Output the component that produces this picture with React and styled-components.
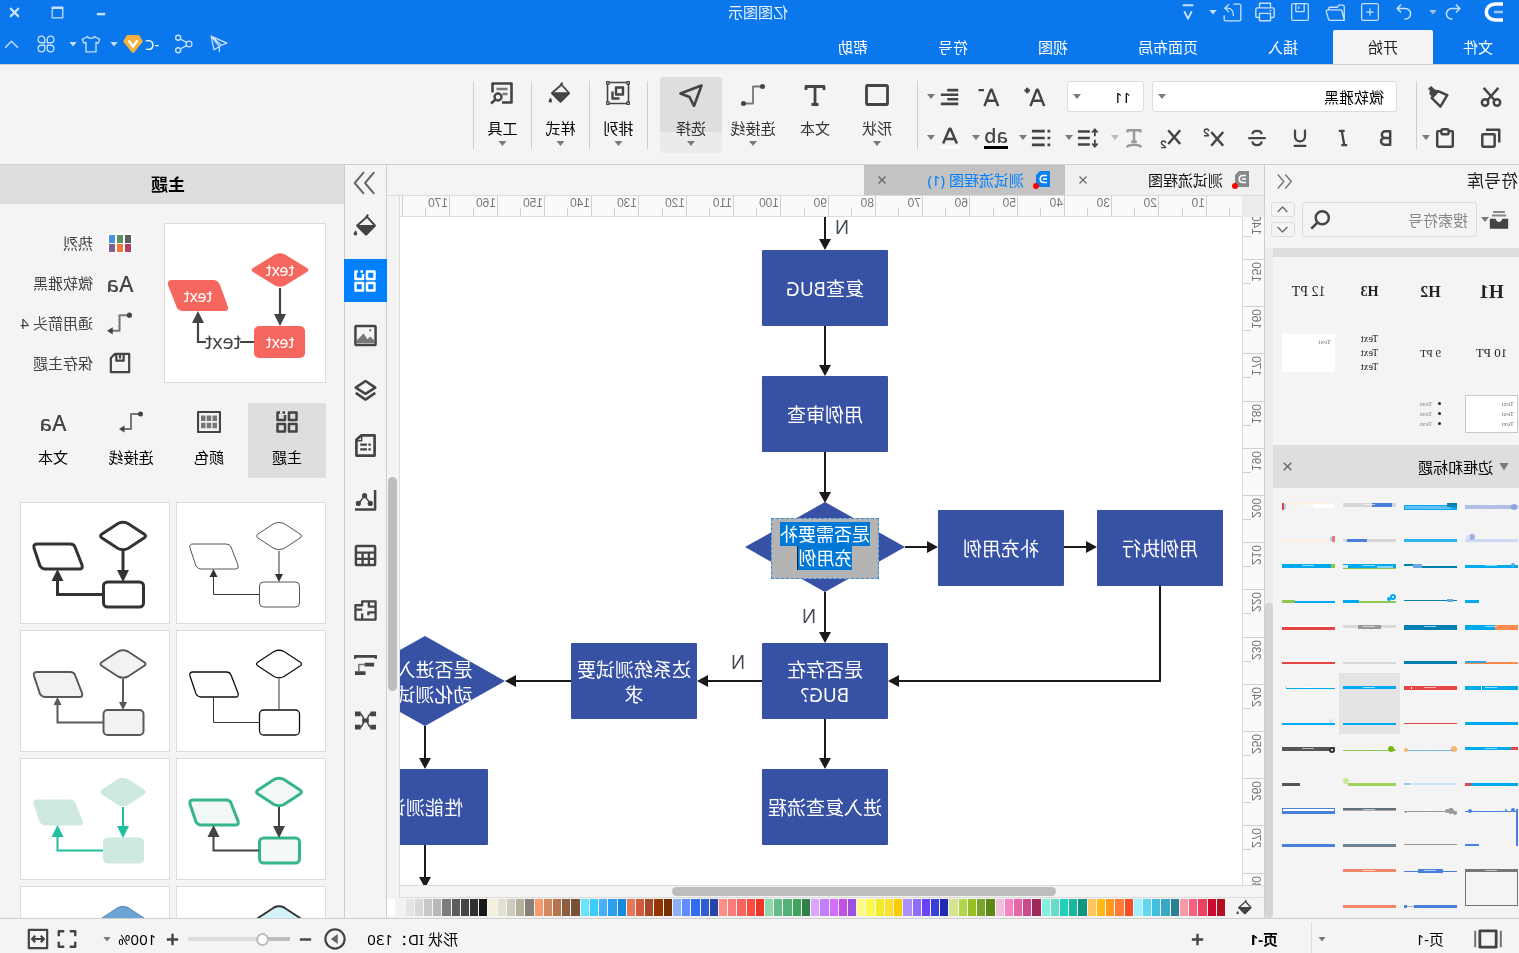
import React from "react";
import styled, { createGlobalStyle, css } from "styled-components";

const GlobalStyle = createGlobalStyle`
  *, *::before, *::after { box-sizing: border-box; }
  html, body, #root { height: 100%; }
  body { margin: 0; overflow: hidden; background: #f4f4f4; }
  body, button, input, select {
    font-family: "Noto Sans", "Noto Sans CJK SC", sans-serif;
    font-size: 15px;
    line-height: 20px;
    color: #111;
  }
  button { border: 0; padding: 0; margin: 0; background: none; cursor: pointer; color: inherit; }
  svg { display: block; flex: none; }
`;

const BLUE = "#0a77ec";
const LINE = "#cfcfcf";
const BAR = "#dedede";

/* The whole window is shown flipped left to right. */
const Window = styled.div`
  height: 100vh;
  display: flex;
  flex-direction: column;
  background: #f4f4f4;
  transform: scaleX(-1);
`;

const Caret = styled.span`
  flex: none;
  width: 8px;
  height: 5px;
  margin-right: ${(p) => p.$after || 0}px;
  background: ${(p) => p.$color || "#7a7a7a"};
  clip-path: polygon(0 0, 100% 0, 50% 100%);
`;

/* ---------- icons ---------- */

const glyphs = {
  undo: <path d="M8 3 3.500 7.500 8 12M4 7.500h9a6 6 0 0 1 0 12h-1" />,
  redo: <path d="M16 3l4.500 4.500L16 12M20 7.500h-9a6 6 0 0 0 0 12h1" />,
  add: (
    <>
      <rect x="2" y="2" width="20" height="20" rx="2" />
      <path d="M12 7.500v9M7.500 12h9" />
    </>
  ),
  folder: <path d="M2 21V5.500a2 2 0 0 1 2-2h4l2 2.500h8a2 2 0 0 1 2 2V9M2 21l2.500-10a2 2 0 0 1 2-2H21a1.500 1.500 0 0 1 1.500 2L20 19.500a2 2 0 0 1-2 1.500z" />,
  save: (
    <>
      <rect x="2" y="2" width="20" height="20" rx="2" />
      <path d="M7 2.500v9h10v-9M13.500 5v3.500" />
    </>
  ),
  print: (
    <>
      <path d="M6 7.500V2.500h12v5M6 18H3.500A1.500 1.500 0 0 1 2 16.500V9a1.500 1.500 0 0 1 1.500-1.500h17A1.500 1.500 0 0 1 22 9v7.500a1.500 1.500 0 0 1-1.500 1.500H18" />
      <path d="M6 13.500h12v8H6zM5 10.500h2" />
    </>
  ),
  exportFile: <path d="M11 2.500H4a1.500 1.500 0 0 0-1.500 1.500v16A1.500 1.500 0 0 0 4 21.500h16a1.500 1.500 0 0 0 1.500-1.500v-5M16 2.500l5 4.500-5 4.500M21 7h-3c-5 0-7 4-7 9" />,
  more: <path d="M5 3h14M7 11l5 10 5-10" />,
  send: <path d="M21.500 2.500 2.500 11l6.500 2.500zM21.500 2.500 18 19l-6.500-4zM11.500 15v6.500M9 13.500l2.500 1.500" />,
  share: (
    <>
      <circle cx="6" cy="12" r="3.500" />
      <circle cx="19" cy="4.500" r="3" />
      <circle cx="19" cy="19.500" r="3" />
      <path d="m9 10 7.500-4M9 14l7.500 4" />
    </>
  ),
  shirt: <path d="M8 3 1.500 6.500 3.500 11 6 10v11.500h12V10l2.500 1 2-4.500L16 3c-1 3-7 3-8 0z" />,
  clover: <path d="M10.500 10.500V6.500a4 4 0 1 0-4 4zM13.500 10.500V6.500a4 4 0 1 1 4 4zM10.500 13.500v4a4 4 0 1 1-4-4zM13.500 13.500v4a4 4 0 1 0 4-4z" />,
  up: <path d="m3 16.500 9-9 9 9" />,
  down: <path d="m3 7.500 9 9 9-9" />,
  minimize: <path d="M7 14.500h10" />,
  maximize: <path d="M3.500 3.500h17v17h-17zM3.500 5.500h17" />,
  close: <path d="m5 5 14 14M19 5 5 19" />,
  cut: (
    <>
      <circle cx="5.500" cy="18" r="3.500" />
      <circle cx="18.500" cy="18" r="3.500" />
      <path d="m20 2-12 13.500M4 2l12 13.500" />
    </>
  ),
  painter: (
    <>
      <path d="M3 10 13 5.500l7 7.500-9.500 9.500z" />
      <path d="m13 5 4-1.500L20.500 0 24 3l-2 2 .5 4-3.500 3z" fill="currentColor" stroke="none" />
    </>
  ),
  copy: (
    <>
      <rect x="8" y="8" width="13.500" height="13.500" rx="1" />
      <path d="M3 17V3h14.500" />
    </>
  ),
  paste: (
    <>
      <path d="M7.500 4.500H4.500a1 1 0 0 0-1 1v15a1 1 0 0 0 1 1h15a1 1 0 0 0 1-1v-15a1 1 0 0 0-1-1h-3" />
      <rect x="8" y="2.500" width="8" height="5.500" rx="2" />
    </>
  ),
  grow: <path d="m2 22 7-18h1l7 18M5 16h9M17.500 5h6M20.500 2v6" />,
  shrink: <path d="m2 22 7-18h1l7 18M5 16h9M17.500 4.500h6" />,
  align: <path d="M3 4.500h12M3 9.500h19M3 14.500h12M3 19.500h19" strokeWidth="2.800" />,
  bold: <path d="M7 4h6a4 4 0 0 1 0 8H7zM7 12h7a4 4 0 0 1 0 8H7z" strokeWidth="3" />,
  italic: <path d="M7 3.500h7M10 20.500h7M10.500 3.500 13.500 20.500" strokeWidth="2.800" transform="matrix(-1 0 0 1 24 0)" />,
  underline: <path d="M6 2v8a6 6 0 0 0 12 0V2M4.500 21.500h15" />,
  strike: <path d="M17.500 7.500C17 2 7 2 6.500 7.500M1.500 12h21M6.500 16c.500 6 10.500 6 11 0" />,
  sup: (
    <>
      <path d="m2 5.500 13 15M15 5.500l-13 15" />
      <path d="M18 4.500c0-3 4.500-3 4.500 0 0 2-4.500 3-4.500 5h5" strokeWidth="1.600" />
    </>
  ),
  sub: (
    <>
      <path d="m2 3.500 13 15M15 3.500l-13 15" />
      <path d="M18 17.500c0-3 4.500-3 4.500 0 0 2-4.500 3-4.500 5h5" strokeWidth="1.600" />
    </>
  ),
  curveText: <path d="M5 6V3.500h14V6M12 3.500V16M9 16h6M4 22c3-3.500 13-3.500 16 0" />,
  spacing: (
    <>
      <path d="M10 5h13M10 12h13M10 19h13" strokeWidth="2.800" />
      <path d="M4.500 3.500V10M1.500 6l3-3.500 3 3.500M4.500 14v6.500M1.500 18l3 3.500 3-3.500" strokeWidth="2" />
    </>
  ),
  list: <path d="M3 4.500h3M9 4.500h14M3 12h3M9 12h14M3 19.500h3M9 19.500h14" strokeWidth="2.800" />,
  fontColor: (
    <>
      <path d="m4.500 18 7-16h1l7 16M7.500 13h9" />
      <path d="M2 22h20" stroke="#fff" strokeWidth="3" />
    </>
  ),
  rect: <rect x="1.500" y="2.500" width="21" height="19" rx="1" strokeWidth="2.800" />,
  text: <path d="M3 7V3.500h18V7M12 3.500v18M8.500 21.500h7" strokeWidth="2.800" />,
  connector: (
    <>
      <path d="M3 3.500h9v17h9" stroke="#777" strokeWidth="1.800" />
      <circle cx="2.500" cy="3.500" r="2.500" fill="currentColor" stroke="none" />
      <circle cx="21.500" cy="20.500" r="2.500" fill="currentColor" stroke="none" />
    </>
  ),
  connectorArrow: (
    <>
      <path d="M3 4h9v15h7" stroke="#777" strokeWidth="2" />
      <circle cx="2.500" cy="4" r="2.500" fill="currentColor" stroke="none" />
      <path d="M18.500 15.500V22.500L24 19z" fill="currentColor" stroke="none" />
    </>
  ),
  select: <path d="M1.500 2.500 22.500 10.500 13.500 14 9 23z" strokeWidth="2.600" />,
  arrange: (
    <>
      <path d="M1.500 1.500h21v21h-21z" strokeWidth="1.600" />
      <path d="M7 6.500h7v7H7zM17.500 10.500v7h-7" strokeWidth="2.400" />
      <path d="M.7.7h2.400v2.400H.7zM20.900.7h2.400v2.400h-2.400zM.7 20.900h2.400v2.400H.7zM20.900 20.900h2.400v2.400h-2.400z" fill="#fff" strokeWidth="1.300" />
    </>
  ),
  bucket: (
    <>
      <path d="M11.500 2.500 3 12l8.500 8.500L20 12 11.500 4.500 9.500 1.500" strokeWidth="1.800" />
      <path d="M3.500 12.500h16l-8 8z" fill="currentColor" />
      <path d="M21.500 16.500c3 4 2 5 0 5s-2-2 0-5z" fill="currentColor" stroke="none" />
    </>
  ),
  tools: (
    <>
      <path d="M12 21.500H2.500V2.500h19v9" strokeWidth="2.600" />
      <path d="M6.500 8h11M6.500 13h5" stroke="#777" />
      <circle cx="16" cy="16" r="3.500" />
      <path d="m18.500 18.500 4.500 4" />
    </>
  ),
  collapse: <path d="m11 2-8.500 10 8.500 10M21.500 2 13 12l8.500 10" />,
  expand: <path d="m3.500 2 8.500 10-8.500 10M13 2l8.500 10L13 22" strokeWidth="1.800" />,
  library: (
    <>
      <path d="M5 2.500h14M3.500 6.500h17" stroke="#888" strokeWidth="2.400" />
      <path d="M1 10.500h7c1 5 7 5 8 0h7v11a1 1 0 0 1-1 1H2a1 1 0 0 1-1-1z" fill="currentColor" stroke="none" />
    </>
  ),
  search: (
    <>
      <circle cx="10" cy="10" r="7.500" strokeWidth="2.800" />
      <path d="m15.500 15.500 7 7" strokeWidth="3" />
    </>
  ),
  blocks: (
    <path d="M2.500 2.500h7.500v7.500H2.500zM14 5V10h7.500V2.500H19M14 2.500h2.500M2.500 14h7.500v7.500H2.500zM14 14h7.500v7.500H14z" strokeWidth="2.500" />
  ),
  image: (
    <>
      <rect x="1.500" y="2" width="21" height="20" rx="1" strokeWidth="2.600" />
      <path d="M3 20v-3l4-4 3 3 4-6 7 7v3z" fill="#777" stroke="none" />
      <path d="M6 6.500h2" stroke="#777" />
    </>
  ),
  layers: <path d="M12 2 1.800 9 12 15.500 22.200 9zM1.800 14.500 12 21.500l10.200-7" strokeWidth="2.600" />,
  doc: (
    <>
      <path d="M2.500 1.500h14L21.500 6v16.500h-19z" strokeWidth="2.800" />
      <path d="M6.500 11h2.500M10.500 11h7M6.500 16h2.500M10.500 16h7" strokeWidth="2.400" />
      <path d="M16 2v5h5" strokeWidth="1.500" />
    </>
  ),
  chart: (
    <>
      <path d="M2 1v20.500h21" strokeWidth="2.600" />
      <path d="M7 15 13 7l6 8" strokeWidth="1.500" />
      <g fill="currentColor" stroke="none">
        <circle cx="7" cy="15" r="2.700" />
        <circle cx="13" cy="7" r="2.700" />
        <circle cx="19.500" cy="15" r="2.700" />
      </g>
    </>
  ),
  table: (
    <>
      <rect x="2" y="2" width="20" height="20" rx="1" strokeWidth="2.600" />
      <path d="M2 9h20M2 15.500h20M8.500 9v13M15 9v13" strokeWidth="2.400" />
    </>
  ),
  floor: <path d="M1.500 2.500h14v4h7v15h-21zM8.500 3v5h-6M8.500 14h-6M9 13v4M15.500 21.500V15M15.500 11h6" strokeWidth="2.400" />,
  slides: (
    <>
      <path d="M1 5V2.500h22V5" strokeWidth="3" />
      <path d="M3 9h10v4H3zM12 18h11v4H12z" fill="currentColor" stroke="none" />
      <path d="M12 11h7v7" stroke="#777" strokeWidth="1.600" />
    </>
  ),
  mind: (
    <>
      <path d="M6 5c4 0 3 7 6 7s2-7 6-7M6 19c4 0 3-7 6-7s2 7 6 7" strokeWidth="1.600" />
      <path d="M1 2.500h6v5H1zM17 2.500h6v5h-6zM1 16.500h6v5H1zM17 16.500h6v5h-6zM8.500 10h7v4h-7z" fill="currentColor" stroke="none" />
    </>
  ),
  palette: (
    <>
      <path d="M1 2h22v20H1z" />
      <path d="M4 5.500h4.500v5.500H4zM9.800 5.500h4.500v5.500H9.800zM15.500 5.500H20v5.500h-4.500zM4 12.800h4.500v5.500H4zM9.800 12.800h4.500v5.500H9.800zM15.500 12.800H20v5.500h-4.500z" fill="#777" stroke="none" />
    </>
  ),
  disk: <path d="M2 2h15.500L22 6.500V22H2zM8 3v6.500h8V3M12 3v4" strokeWidth="2.400" />,
  pages: (
    <>
      <rect x="5" y="5" width="14" height="14" strokeWidth="2.400" />
      <path d="M1 5v14M23 5v14" strokeWidth="1.800" stroke="#777" />
    </>
  ),
  plus: <path d="M12 4v16M4 12h16" strokeWidth="3.400" />,
  minus: <path d="M4 12h16" strokeWidth="3.400" />,
  present: (
    <>
      <circle cx="12" cy="12" r="10.500" strokeWidth="2.400" />
      <path d="M9 6.500v11l7.500-5.500z" fill="#666" stroke="none" />
    </>
  ),
  fullscreen: <path d="M3 9V3.500h6M15 3.500h6V9M21 15v5.500h-6M9 20.500H3V15" strokeWidth="2.600" />,
  fit: <path d="M2 2h20v20H2zM6 12h12M9 8.500 5.500 12 9 15.500M15 8.500l3.500 3.500-3.500 3.500" strokeWidth="2.400" />,
};

const Icon = ({ name, size = 24, weight = 2.2 }) => (
  <svg
    width={size}
    height={size}
    viewBox="0 0 24 24"
    fill="none"
    stroke="currentColor"
    strokeWidth={weight}
    strokeLinejoin="round"
    aria-hidden="true"
  >
    {glyphs[name]}
  </svg>
);

/* ---------- title bar and menu ---------- */

const Header = styled.header`
  background: ${BLUE};
  color: #c8e0fb;
  border-bottom: 1px solid ${LINE};
`;

const TitleBar = styled.div`
  height: 30px;
  display: grid;
  grid-template-columns: 1fr auto 1fr;
  padding: 0 2px 6px 5px;
  align-items: center;
`;

const Title = styled.h1`
  margin: 0;
  font-size: 15px;
  font-weight: 400;
  line-height: 20px;
  color: #e8f2ff;
`;

const QuickBar = styled.div`
  display: flex;
  align-items: center;
  padding-left: 10px;
`;

const Logo = styled.svg`
  margin-right: 15px;
`;

const QuickButton = styled.button`
  width: ${(p) => p.$w || 35}px;
  height: 22px;
  color: inherit;
  display: flex;
  align-items: center;
  justify-content: center;
`;

const WindowButtons = styled.div`
  display: flex;
  justify-content: flex-end;
`;

const WindowButton = styled(QuickButton)`
  width: 26px;
  margin-left: 17px;
`;

const MenuRow = styled.div`
  height: 34px;
  display: flex;
  justify-content: space-between;
`;

const Tabs = styled.nav`
  display: flex;
`;

const MenuTab = styled.button`
  padding: ${(p) => (p.$first ? "0 30px 0 26px" : "0 35px")};
  height: 34px;
  font-size: 15px;
  color: ${(p) => (p.$active ? "#222" : "#fff")};
  background: ${(p) => (p.$active ? "#f4f4f4" : "transparent")};
  border-radius: 2px 2px 0 0;
`;

const MenuTools = styled.div`
  display: flex;
  align-items: center;
  padding: 0 0 6px;
`;

const UserName = styled.span`
  color: #fff;
  font-size: 15px;
  margin: 0 2px 0 7px;
`;

const AppHeader = () => (
  <Header>
    <TitleBar>
      <QuickBar>
        <Logo width="20" height="22" viewBox="0 0 20 22" fill="none" aria-label="logo">
          <path d="M1 3h7c13 0 13 16 0 16H1" stroke="#fff" strokeWidth="3.600" />
          <path d="M1 11h9" stroke="#9cc9f8" strokeWidth="2.600" />
        </Logo>
        <QuickButton $w={32} aria-label="撤销"><Icon name="undo" size={21} weight={1.7} /></QuickButton>
        <Caret $color="#a8c4dc" $after={7} />
        <QuickButton $w={34} aria-label="重做"><Icon name="redo" size={21} weight={1.7} /></QuickButton>
        <QuickButton aria-label="新建"><Icon name="add" size={20} weight={1.5} /></QuickButton>
        <QuickButton aria-label="打开"><Icon name="folder" size={21} weight={1.5} /></QuickButton>
        <QuickButton aria-label="保存"><Icon name="save" size={20} weight={1.5} /></QuickButton>
        <QuickButton aria-label="打印"><Icon name="print" size={22} weight={1.5} /></QuickButton>
        <QuickButton $w={31} aria-label="导出"><Icon name="exportFile" size={21} weight={1.5} /></QuickButton>
        <Caret $color="#c8e0fb" />
        <QuickButton $w={42} aria-label="更多"><Icon name="more" size={18} weight={2.4} /></QuickButton>
      </QuickBar>
      <Title>亿图图示</Title>
      <WindowButtons>
        <WindowButton aria-label="最小化"><Icon name="minimize" size={20} weight={3} /></WindowButton>
        <WindowButton aria-label="最大化"><Icon name="maximize" size={15} weight={2} /></WindowButton>
        <WindowButton aria-label="关闭"><Icon name="close" size={15} weight={3.4} /></WindowButton>
      </WindowButtons>
    </TitleBar>
    <MenuRow>
      <Tabs>
        <MenuTab $first>文件</MenuTab>
        <MenuTab $active>开始</MenuTab>
        <MenuTab>插入</MenuTab>
        <MenuTab>页面布局</MenuTab>
        <MenuTab>视图</MenuTab>
        <MenuTab>符号</MenuTab>
        <MenuTab>帮助</MenuTab>
      </Tabs>
      <MenuTools>
        <QuickButton aria-label="发送"><Icon name="send" size={20} weight={1.5} /></QuickButton>
        <QuickButton aria-label="分享"><Icon name="share" size={20} weight={1.6} /></QuickButton>
        <UserName>-C</UserName>
        <svg width="20" height="18" viewBox="0 0 20 18" aria-label="VIP">
          <path d="M4 0h12l4 6.500L11 17.500a1.500 1.500 0 0 1-2 0L0 6.500z" fill="#f6b040" />
          <path d="m5.500 5.500 4.500 6 4.500-6" stroke="#fff" strokeWidth="2.400" fill="none" />
        </svg>
        <QuickButton $w={18} aria-label="账户"><Caret $color="#c8e0fb" /></QuickButton>
        <QuickButton $w={28} aria-label="皮肤"><Icon name="shirt" size={20} weight={1.6} /></QuickButton>
        <Caret $color="#c8e0fb" />
        <QuickButton $w={46} aria-label="应用"><Icon name="clover" size={20} weight={1.6} /></QuickButton>
        <QuickButton $w={23} aria-label="收起"><Icon name="up" size={17} weight={2} /></QuickButton>
      </MenuTools>
    </MenuRow>
  </Header>
);

/* ---------- ribbon ---------- */

const Ribbon = styled.div`
  height: 100px;
  flex: none;
  display: flex;
  align-items: flex-start;
  padding-top: 16px;
  border-bottom: 1px solid ${LINE};
  color: #444;
`;

const Divider = styled.span`
  flex: none;
  width: 1px;
  height: 68px;
  background: ${LINE};
`;

const ClipGroup = styled.div`
  display: grid;
  grid-template-columns: 36px 36px;
  grid-auto-rows: 31px;
  gap: 10px 16px;
  padding: 0 4px 0 10px;
`;

const ToolButton = styled.button`
  width: ${(p) => p.$w || 36}px;
  height: 31px;
  color: ${(p) => (p.$muted ? "#999" : "#444")};
  display: flex;
  align-items: center;
  justify-content: center;
  gap: 4px;
`;

const FontGroup = styled.div`
  display: grid;
  gap: 10px;
  width: 498px;
  padding-right: 8px;
`;

const FontRow = styled.div`
  display: flex;
  align-items: center;
  padding-left: ${(p) => p.$inset}px;
`;

const Spread = styled.div`
  flex: 1;
  display: flex;
  justify-content: space-between;
  padding-left: 4px;
`;

const Picker = styled.label`
  display: flex;
  align-items: center;
  width: ${(p) => p.$w}px;
  height: 31px;
  margin-right: ${(p) => p.$after}px;
  padding-right: 5px;
  background: #fff;
  border: 1px solid #dcdcdc;
  border-radius: 3px;

  select {
    flex: 1;
    height: 29px;
    appearance: none;
    border: 0;
    background: none;
    padding: 0 0 0 12px;
    color: #000;
  }
`;

const Highlight = styled.span`
  width: 24px;
  height: 23px;
  font-size: 20px;
  font-weight: 500;
  line-height: 19px;
  border-bottom: 3px solid #000;
`;

const BigGroup = styled.div`
  display: flex;
  margin-top: -4px;
  padding: 0 12px 0 9px;
`;

const BigButton = styled.button`
  width: ${(p) => (p.$narrow ? 57 : 62)}px;
  height: 76px;
  padding-top: ${(p) => (p.$narrow ? 4 : 6)}px;
  display: flex;
  flex-direction: column;
  align-items: center;
  border-radius: 3px;
  color: #444;
  ${(p) => p.$narrow && css`margin-top: -4px;`}
  ${(p) => p.$active && css`background: linear-gradient(#dedede 55px, #ebebeb 55px);`}
`;

const BigLabel = styled.span`
  margin: ${(p) => (p.$dark ? 13 : 11)}px 0 3px;
  height: 20px;
  font-size: 15px;
  color: ${(p) => (p.$dark ? "#000" : "#333")};
`;

const Big = ({ icon, label, active, caret = true, narrow }) => (
  <BigButton $active={active} $narrow={narrow}>
    <Icon name={icon} weight={2.4} />
    <BigLabel $dark={narrow}>{label}</BigLabel>
    {caret && <Caret />}
  </BigButton>
);

const Tool = ({ icon, label, w, caret, muted, size = 22 }) => (
  <ToolButton aria-label={label} $w={w} $muted={muted}>
    <Icon name={icon} size={caret ? 22 : size} weight={2.7} />
    {caret && <Caret $color={muted ? "#bbb" : undefined} />}
  </ToolButton>
);

const RibbonBar = () => (
  <Ribbon>
    <ClipGroup>
      <Tool icon="cut" label="剪切" />
      <Tool icon="painter" label="格式刷" />
      <Tool icon="copy" label="复制" />
      <Tool icon="paste" label="粘贴" caret />
    </ClipGroup>
    <Divider />
    <FontGroup>
      <FontRow $inset={19}>
        <Picker $w={245} $after={8}>
          <select aria-label="字体" defaultValue="a"><option value="a">微软雅黑</option></select>
          <Caret />
        </Picker>
        <Picker $w={77} $after={9}>
          <select aria-label="字号" defaultValue="11"><option>11</option></select>
          <Caret />
        </Picker>
        <Tool icon="grow" label="增大字号" w={46} />
        <Tool icon="shrink" label="减小字号" w={46} />
        <Spread><Tool icon="align" label="对齐" caret /></Spread>
      </FontRow>
      <FontRow $inset={8}>
        <Tool icon="bold" label="加粗" w={43} size={20} />
        <Tool icon="italic" label="斜体" w={43} size={20} />
        <Tool icon="underline" label="下划线" w={43} size={20} />
        <Tool icon="strike" label="删除线" w={43} size={20} />
        <Tool icon="sup" label="上标" w={43} />
        <Tool icon="sub" label="下标" w={43} />
        <Spread>
          <Tool icon="curveText" label="文本方向" caret muted />
          <Tool icon="spacing" label="行距" caret />
          <Tool icon="list" label="列表" caret />
          <ToolButton><Highlight>ab</Highlight><Caret /></ToolButton>
          <Tool icon="fontColor" label="字体颜色" caret />
        </Spread>
      </FontRow>
    </FontGroup>
    <Divider />
    <BigGroup>
      <Big icon="rect" label="形状" />
      <Big icon="text" label="文本" caret={false} />
      <Big icon="connector" label="连接线" />
      <Big icon="select" label="选择" active />
    </BigGroup>
    <Divider />
    <Big icon="arrange" label="排列" narrow />
    <Divider />
    <Big icon="bucket" label="样式" narrow />
    <Divider />
    <Big icon="tools" label="工具" narrow />
    <Divider />
  </Ribbon>
);

/* ---------- symbol library ---------- */

const Body = styled.div`
  flex: 1;
  min-height: 0;
  display: flex;
`;

const Library = styled.aside`
  flex: none;
  width: 255px;
  display: flex;
  flex-direction: column;
  border-right: 1px solid ${LINE};
`;

const LibraryTitle = styled.div`
  height: 32px;
  display: flex;
  align-items: center;
  justify-content: space-between;
  padding: 0 11px 0 1px;
  color: #777;

  h2 { margin: 0; font-size: 17px; font-weight: 400; line-height: 24px; color: #222; }
`;

const SearchRow = styled.div`
  display: flex;
  align-items: center;
  padding: 5px 7px 11px 10px;
  color: #444;
`;

const SearchBox = styled.label`
  width: 175px;
  height: 35px;
  margin: 0 7px 0 4px;
  padding: 0 7px 0 8px;
  display: flex;
  align-items: center;
  border: 1px solid #dcdcdc;
  border-radius: 3px;

  input {
    flex: 1;
    min-width: 0;
    padding: 0;
    border: 0;
    background: none;
    outline: 0;
  }
  input::placeholder { color: #888; opacity: 1; }
`;

const Steps = styled.div`
  display: grid;
  gap: 5px;

  button {
    width: 24px;
    height: 15px;
    display: flex;
    align-items: center;
    justify-content: center;
    color: #666;
    border: 1px solid #dcdcdc;
    border-radius: 3px;
  }
`;

const LibraryScroll = styled.div`
  flex: 1;
  min-height: 0;
  display: flex;
`;

const LibraryList = styled.div`
  flex: 1;
  overflow: hidden;
`;

const LibraryTrack = styled.div`
  width: 8px;
  background: #ececec;
  padding-top: 355px;

  &::before {
    content: "";
    display: block;
    height: 315px;
    border-radius: 4px;
    background: #d4d4d4;
  }
`;

const SectionEdge = styled.div`
  height: 9px;
  background: ${BAR};
`;

const Grid = styled.div`
  display: grid;
  grid-template-columns: repeat(4, 53px);
  column-gap: 8px;
  padding-left: 1px;
`;

const TextGrid = styled(Grid)`
  height: 188px;
  padding-top: 4px;
  grid-auto-rows: 61px;
  align-items: center;
  justify-items: center;
  font-family: "Liberation Serif", serif;
  white-space: nowrap;
  color: #222;
`;

const Sample = styled.span`
  font-size: ${(p) => p.$size}px;
  font-weight: ${(p) => (p.$bold ? 700 : 400)};
  line-height: ${(p) => p.$lh || 20}px;
  color: ${(p) => (p.$faint ? "#777" : "inherit")};
  white-space: pre-line;
`;

const SampleBox = styled.div`
  width: 53px;
  height: 38px;
  padding: 3px;
  display: flex;
  background: #fff;
  border: 1px solid ${(p) => (p.$lined ? "#c8c8c8" : "#fff")};
`;

const BulletList = styled.ul`
  margin: 0;
  padding: 0;
  list-style: none;
  font-size: 7px;
  line-height: 10px;
  color: #888;

  li::before {
    content: "";
    display: inline-block;
    width: 3px;
    height: 3px;
    margin-right: 6px;
    border-radius: 50%;
    background: #222;
    vertical-align: middle;
  }
`;

const SectionBar = styled.div`
  height: 43px;
  display: flex;
  align-items: center;
  padding: 0 8px 0 10px;
  background: ${BAR};
  color: #666;

  h3 { flex: 1; margin: 0 0 0 6px; font-size: 15px; font-weight: 400; color: #000; }
`;

const BigCaret = styled(Caret)`
  width: 10px;
  height: 8px;
`;

const FrameGrid = styled(Grid)`
  padding-top: 2px;
  grid-auto-rows: 61px;
`;

const FrameCell = styled.button`
  width: 61px;
  height: 61px;
  margin-left: -4px;
  padding: 12px 4px;
  background: ${(p) => (p.$active ? "#e3e3e3" : "none")};
`;

const C = "#00aaee", D = "#0080b0", R = "#e64545", B = "#4a80dc", O = "#ff8a50", G = "#8cc850";
/* Each shape: x, y, width, height, colour; "o" marks a dot (cx, cy, r). */
const frames = [
  [[0, 3, 53, 4, "#b0bfe8"], ["o", 4, 5, 3, "#8fa3dd"], [0, 37, 53, 3, "#ced8f3"], ["o", 46, 35, 3, "#9fb0e4"], ["o", 50, 35, 2, "#d8e0f5"]],
  [[0, 3, 53, 5, C], [6, 4, 46, 3, "#66bdf2"], [0, 1, 10, 4, D], [0, 37, 53, 3, "#2cb6ee"]],
  [[0, 1, 53, 4, "#d6d6d6"], [4, 1, 20, 4, B], [0, 37, 53, 3, "#d6d6d6"], [29, 37, 20, 3, B]],
  [[0, 1, 53, 2, "#fdeedd"], [1, 2, 21, 4, "#fff"], [51, 1, 2, 7, R], [49, 2, 2, 5, "#a8d8f4"], [0, 38, 53, 2, "#fdeedd"], [0, 34, 3, 6, "#ee7777"], [3, 35, 2, 4, "#a8d8f4"]],
  [[0, 2, 53, 3, C], ["o", 5, 2, 2, "#5aa8e0"], [39, 37, 14, 3, C]],
  [[38, 1, 15, 2, D], [0, 3, 38, 2, D], [35, 1, 9, 4, "#66a8e0"], [0, 37, 53, 1, D], [4, 36, 6, 3, "#66a8e0"]],
  [[0, 1, 53, 4, C], [0, 5, 53, 1, G], [48, 2, 5, 3, "#d0ecf8"], [3, 3, 16, 2, "#88d4f4"], [0, 38, 37, 2, G], [37, 37, 16, 3, C], ["o", 3, 34, 3, C], ["o", 3, 34, 1, "#fff"], ["o", 7, 36, 2, C]],
  [[0, 1, 53, 4, C], [0, 1, 4, 4, G], [0, 38, 40, 2, C], [40, 37, 13, 3, G]],
  [[23, 1, 30, 5, C], [0, 1, 23, 5, O], [0, 38, 53, 2, O], [32, 37, 21, 2, "#30a4dc"]],
  [[0, 1, 53, 5, D], [0, 37, 53, 3, D]],
  [[0, 1, 53, 3, "#d8d8d8"], [15, 1, 23, 4, "#999"], [0, 38, 53, 2, "#d8d8d8"]],
  [[0, 1, 53, 2, "#fff"], [0, 3, 53, 3, R], [0, 38, 53, 2, R]],
  [[0, 1, 53, 4, C], [36, 1, 1, 4, "#fff"], [0, 37, 53, 3, C]],
  [[0, 1, 53, 4, R], [45, 2, 1, 2, "#fff"], [0, 38, 53, 1, R]],
  [[0, 1, 53, 3, C], [0, 38, 53, 2, C]],
  [[0, 3, 49, 1, C], ["o", 49, 2, 1, "#bde"], [0, 38, 53, 2, C], ["o", 4, 36, 2, "#cfe4ee"]],
  [[0, 1, 53, 3, C], [0, 1, 7, 3, R], [0, 37, 53, 3, C], [47, 37, 6, 3, R]],
  [[0, 4, 53, 1, "#78b8e8"], ["o", 3, 3, 3, "#f4b868"], ["o", 5, 4, 1, "#a8a0e0"], ["o", 51, 4, 2, "#f4b868"], [0, 37, 53, 2, "#c8e8f6"], [47, 37, 6, 2, "#90c8ec"]],
  [[0, 4, 53, 1, G], ["o", 5, 3, 3, "#78b818"], ["o", 2, 4, 1, "#78b818"], [0, 37, 48, 3, "#9ed25c"], ["o", 50, 35, 3, "#cbea98"]],
  [[0, 1, 53, 4, "#555"], ["o", 3, 4, 3, "#333"], ["o", 3, 4, 1, "#fff"], [35, 37, 18, 3, "#555"]],
  [[0, 4, 53, 1, B], [0, 2, 2, 37, B], ["o", 5, 3, 2, B], ["o", 12, 3, 1, B], ["o", 48, 4, 2, B], [39, 37, 14, 2, B]],
  [[0, 4, 53, 1, "#999"], ["o", 6, 4, 3, "#999"], ["o", 10, 4, 2, "#999"], ["o", 2, 6, 2, "#999"], ["o", 51, 5, 1, "#999"], [0, 37, 53, 1, "#999"]],
  [[0, 1, 53, 2, "#5f7180"], [0, 3, 53, 1, "#b0a8a0"], [0, 37, 53, 3, "#6f8190"]],
  [[0, 1, 53, 6, B], [1, 2, 51, 2, "#fff"], [0, 37, 53, 3, B]],
  [[0, 1, 53, 37, "#777"], [1, 4, 51, 33, "#f4f4f4"]],
  [[0, 3, 53, 1, B], [14, 1, 25, 4, B], [0, 37, 43, 3, B], [43, 38, 8, 1, "#aaa"], [50, 37, 3, 3, B]],
  [[0, 1, 53, 3, "#f2866a"], [0, 37, 53, 3, "#f2866a"]],
];

const Frame = ({ shapes }) => (
  <svg width="53" height="40" viewBox="0 0 53 40" aria-hidden="true">
    {shapes.map((s, i) =>
      s[0] === "o" ? (
        <circle key={i} cx={s[1]} cy={s[2]} r={s[3]} fill={s[4]} />
      ) : (
        <rect key={i} x={s[0]} y={s[1]} width={s[2]} height={s[3]} fill={s[4]} />
      )
    )}
    <path d="M21 2.500h12" stroke="#fff" strokeOpacity=".6" />
  </svg>
);

const SymbolLibrary = () => (
  <Library>
    <LibraryTitle>
      <h2>符号库</h2>
      <button aria-label="收起符号库"><Icon name="collapse" size={17} weight={2} /></button>
    </LibraryTitle>
    <SearchRow>
      <Icon name="library" size={20} />
      <Caret />
      <SearchBox>
        <input aria-label="搜索符号" placeholder="搜索符号" />
        <Icon name="search" size={21} />
      </SearchBox>
      <Steps>
        <button aria-label="上一个"><Icon name="up" size={13} weight={2.4} /></button>
        <button aria-label="下一个"><Icon name="down" size={13} weight={2.4} /></button>
      </Steps>
    </SearchRow>
    <LibraryScroll>
      <LibraryList>
        <SectionEdge />
        <TextGrid>
          <Sample $size={19} $bold>H1</Sample>
          <Sample $size={16} $bold>H2</Sample>
          <Sample $size={14} $bold>H3</Sample>
          <Sample $size={14}>12 PT</Sample>
          <Sample $size={13}>10 PT</Sample>
          <Sample $size={11}>9 PT</Sample>
          <Sample $size={10} $lh={14}>{"Text\nText\nText"}</Sample>
          <SampleBox><Sample $size={7} $lh={8} $faint>Text</Sample></SampleBox>
          <SampleBox $lined><Sample $size={7} $lh={10} $faint>{"Text\nText\nText"}</Sample></SampleBox>
          <BulletList><li>Text</li><li>Text</li><li>Text</li></BulletList>
        </TextGrid>
        <SectionBar>
          <BigCaret />
          <h3>边框和标题</h3>
          <button aria-label="关闭"><Icon name="close" size={13} weight={2.6} /></button>
        </SectionBar>
        <FrameGrid>
          {frames.map((shapes, i) => (
            <FrameCell key={i} $active={i === 14} aria-label={"边框 " + (i + 1)}><Frame shapes={shapes} /></FrameCell>
          ))}
        </FrameGrid>
      </LibraryList>
      <LibraryTrack />
    </LibraryScroll>
  </Library>
);

/* ---------- drawing area ---------- */

const Editor = styled.main`
  flex: 1;
  min-width: 0;
  display: flex;
  flex-direction: column;
`;

const DocTabs = styled.div`
  height: 31px;
  flex: none;
  display: flex;
  border-bottom: 1px solid #dcdcdc;
`;

const DocTab = styled.div`
  width: ${(p) => (p.$active ? 201 : 199)}px;
  display: flex;
  align-items: center;
  padding: 0 12px 0 14px;
  background: ${(p) => (p.$active ? "#c3c3c3" : "#f0f0f0")};
  color: #666;

  a {
    flex: 1;
    margin-left: 9px;
    text-decoration: none;
    color: ${(p) => (p.$active ? "#0080ff" : "#111")};
  }
`;

const DocIcon = ({ color }) => (
  <svg width="18" height="18" viewBox="0 0 18 18" aria-hidden="true">
    <path d="M1 0h10l4 4v12H1z" fill={color} />
    <path d="M4 4.500h3c5 0 5 7 0 7H4M4 8h4" fill="none" stroke="#fff" strokeWidth="1.600" />
    <circle cx="15" cy="15" r="3" fill="#f00" />
  </svg>
);

const Sheet = styled.div`
  flex: 1;
  min-height: 0;
  display: grid;
  grid-template-columns: 22px 1fr 13px;
  grid-template-rows: 21px 1fr 13px;
`;

const Corner = styled.div`
  background: #ececec;
`;

const RulerTop = styled.div`
  overflow: hidden;
  background: #fafafa;
  border-bottom: 1px solid #dcdcdc;
`;

const RulerSide = styled.div`
  overflow: hidden;
  background: #fafafa;
  border-right: 1px solid #dcdcdc;
`;

const Canvas = styled.div`
  position: relative;
  overflow: hidden;
  background: #fff;
`;

const TrackV = styled.div`
  grid-row: 1 / 4;
  grid-column: 3;
  padding: 281px 0 0 2px;
  border-left: 1px solid #dcdcdc;
  background: #f4f4f4;

  &::before {
    content: "";
    display: block;
    width: 9px;
    height: 214px;
    border-radius: 5px;
    background: #bdbdbd;
  }
`;

const TrackH = styled.div`
  grid-column: 1 / 3;
  padding: 1px 0 0 208px;
  border-top: 1px solid #dcdcdc;
  border-bottom: 1px solid #dcdcdc;

  &::before {
    content: "";
    display: block;
    width: 384px;
    height: 9px;
    border-radius: 5px;
    background: #bdbdbd;
  }
`;

const Connectors = styled.svg`
  position: absolute;
  left: 0;
  top: 0;
`;

const Node = styled.div`
  position: absolute;
  left: ${(p) => p.$x}px;
  top: ${(p) => p.$y}px;
  width: ${(p) => (p.$diamond ? 160 : 126)}px;
  height: ${(p) => (p.$diamond ? 90 : 76)}px;
  padding-top: 3px;
  display: flex;
  align-items: center;
  justify-content: center;
  text-align: center;
  white-space: pre-line;
  font-size: 19px;
  line-height: 25px;
  color: #fff;
  background: #3751a4;
  border-radius: ${(p) => (p.$diamond ? 0 : 1)}px;
  ${(p) => p.$diamond && css`clip-path: polygon(50% 0, 100% 50%, 50% 100%, 0 50%);`}
`;

const FlowLabel = styled.span`
  position: absolute;
  left: ${(p) => p.$x}px;
  top: ${(p) => p.$y}px;
  width: 20px;
  text-align: center;
  font-size: 19px;
  line-height: 24px;
  color: #444b55;
`;

const TextEditor = styled.div`
  position: absolute;
  left: 363px;
  top: 301px;
  width: 108px;
  height: 61px;
  padding-top: 3px;
  display: flex;
  flex-direction: column;
  align-items: center;
  background: #b4b4b4;
  border: 1px dashed #3c8ce4;

  span {
    height: 24px;
    font-size: 18px;
    line-height: 24px;
    color: #fff;
    background: #0078d7;
  }
  span:last-child { border-right: 1px solid #222; }
`;

const range = (from, to) => Array.from({ length: to - from }, (_, i) => from + i);

const HorizontalRuler = () => (
  <RulerTop>
    <svg width="100%" height="20" fontFamily="Liberation Sans" fontSize="12" fill="#777">
      {range(0, 19).map((n) => {
        const x = Math.round(n * 47.27 - 12);
        return (
          <g key={n}>
            <path d={`M${x + 0.5} 0v20M${x + 24.5} 12v8`} stroke="#d0d0d0" />
            {n > 0 && n < 18 && <text x={x + 2} y="11">{n * 10}</text>}
          </g>
        );
      })}
    </svg>
  </RulerTop>
);

const VerticalRuler = () => (
  <RulerSide>
    <svg width="22" height="100%" fontFamily="Liberation Sans" fontSize="12" fill="#777">
      {range(14, 30).map((n) => {
        const y = Math.round((n - 15) * 47.2 + 42);
        return (
          <g key={n}>
            <path d={`M0 ${y + 0.5}h22M13 ${y + 24.5}h9`} stroke="#d0d0d0" />
            {n < 29 && <text transform={`translate(12 ${y + 23}) rotate(-90)`}>{n * 10}</text>}
          </g>
        );
      })}
    </svg>
  </RulerSide>
);

const head = {
  down: (x, y) => `M${x} ${y}l-6-11h12z`,
  left: (x, y) => `M${x} ${y}l11-6v12z`,
  right: (x, y) => `M${x} ${y}l-11-6v12z`,
};

const Flowchart = () => (
  <Canvas>
    <Connectors width="1200" height="900" fill="none">
      <path
        stroke="#1a1a1a"
        strokeWidth="2"
        d="M417 0V26M417 109V152M417 235V278M417 375V419M417 502V545M817 509V545M817 628V662M337 330H312M178 330H153M82 369V464H346M480 464H538M671 464H730"
      />
      <path
        fill="#1a1a1a"
        d={[
          head.down(417, 33), head.down(417, 159), head.down(417, 286), head.down(417, 426),
          head.down(417, 552), head.down(817, 552), head.down(817, 671),
          head.left(304, 330), head.left(145, 330),
          head.right(354, 464), head.right(545, 464), head.right(737, 464),
        ].join("")}
      />
    </Connectors>
    <Node $x={354} $y={33}>复查BUG</Node>
    <Node $x={354} $y={159}>用例审查</Node>
    <Node $x={337} $y={285} $diamond />
    <Node $x={178} $y={293}>补充用例</Node>
    <Node $x={19} $y={293}>用例执行</Node>
    <Node $x={354} $y={426}>{"是否存在\nBUG?"}</Node>
    <Node $x={545} $y={426}>{"达系统测试要\n求"}</Node>
    <Node $x={737} $y={419} $diamond>{"是否进入自\n动化测试？"}</Node>
    <Node $x={354} $y={552}>进入复查流程</Node>
    <Node $x={754} $y={552}>性能测试</Node>
    <FlowLabel $x={390} $y={-2}>N</FlowLabel>
    <FlowLabel $x={423} $y={387}>N</FlowLabel>
    <FlowLabel $x={494} $y={433}>N</FlowLabel>
    <TextEditor><span>是否需要补</span><span>充用例</span></TextEditor>
  </Canvas>
);

const colours =
  "b01020 cc0a30 ee4060 f76080 f99aab 2a7f90 38a8c4 40c0e0 60d8f0 a0f0ff f55024 ff7c38 ff981c ffb814 ffc460 109480 18b8a0 20d0b8 68dcc8 84eee0 a02858 c84c8c e468a8 f884c4 f0c0dc 5c8814 78a428 98c024 b4d44c d4e490 2028b4 3840dc 6844f4 906cfc ac90fc fccc00 fce030 f0ec2c fcf850 fcfc84 9c50e0 c450e8 d46cfc c080fc dca4fc 308048 40a45c 54b078 64bc88 90d8ac f03428 fc4c3c f86464 fc7c7c fc9088 2844a8 305cd4 346cf0 608cfc 88b0f8 783000 983400 a84828 d05c40 e47858 188cdc 2ca0f0 44b0fc 3cccfc 68e4fc 785038 905c40 b47450 d48860 f8986c 888078 b4b09c ccccbc e4e0d0 f4f0dc 181818 303030 444444 5c5c5c 7c7c7c b8b8b8 c8c8c8 d8d8d8 e4e4e4 f2f2f2 ffffff".split(" ");

const PaletteBar = styled.div`
  height: 20px;
  flex: none;
  display: flex;
  gap: 1px;
  padding: 1px 0 2px 11px;
  color: #444;
`;

const PaletteIcon = styled.button`
  margin-right: 10px;
  color: inherit;
`;

const Swatch = styled.span`
  flex: 1;
  background: #${(p) => p.$c};
`;

const DrawingArea = () => (
  <Editor>
    <DocTabs>
      <DocTab>
        <DocIcon color="#888" />
        <a href="#doc">测试流程图</a>
        <button aria-label="关闭"><Icon name="close" size={12} weight={2.4} /></button>
      </DocTab>
      <DocTab $active>
        <DocIcon color="#0a80f0" />
        <a href="#doc1">测试流程图 (1)</a>
        <button aria-label="关闭"><Icon name="close" size={12} weight={2.4} /></button>
      </DocTab>
    </DocTabs>
    <Sheet>
      <Corner />
      <HorizontalRuler />
      <TrackV />
      <VerticalRuler />
      <Flowchart />
      <TrackH />
    </Sheet>
    <PaletteBar>
      <PaletteIcon aria-label="填充颜色"><Icon name="bucket" size={17} /></PaletteIcon>
      {colours.map((c, i) => <Swatch key={i} $c={c} />)}
    </PaletteBar>
  </Editor>
);

/* ---------- rail and theme panel ---------- */

const Rail = styled.nav`
  flex: none;
  width: 43px;
  display: flex;
  flex-direction: column;
  align-items: center;
  border-left: 1px solid ${LINE};
  border-right: 1px solid ${LINE};
`;

const RailButton = styled.button`
  flex: none;
  width: 43px;
  height: 43px;
  margin-bottom: 12px;
  display: flex;
  align-items: center;
  justify-content: center;
  color: ${(p) => (p.$active ? "#fff" : "#444")};
  background: ${(p) => (p.$active ? "#0080ff" : "none")};
`;

const RailToggle = styled(RailButton)`
  height: 36px;
  margin-bottom: 3px;
  color: #666;
`;

const ThemePanel = styled.aside`
  flex: none;
  width: 344px;
  overflow: hidden;
`;

const ThemeHeader = styled.h2`
  margin: 0;
  height: 39px;
  padding-left: 8px;
  font-size: 17px;
  font-weight: 700;
  line-height: 40px;
  text-align: center;
  color: #000;
  background: ${BAR};
`;

const ThemeTop = styled.div`
  display: flex;
  padding: 19px 0 20px 18px;
`;

const Preview = styled.div`
  width: 162px;
  height: 160px;
  background: #fff;
  border: 1px solid #dcdcdc;
`;

const Options = styled.div`
  display: flex;
  flex-direction: column;
  margin-left: 30px;

  button {
    height: 40px;
    display: flex;
    align-items: center;
    gap: 13px;
    color: #444;
  }
`;

const IconSlot = styled.span`
  width: 28px;
  display: flex;
  justify-content: center;
  align-items: center;
  height: 24px;
  font-size: 22px;
  font-weight: 500;
`;

const ThemeTabs = styled.div`
  display: flex;
  padding-left: 18px;
`;

const ThemeTab = styled.button`
  width: 78px;
  height: 75px;
  padding-top: 7px;
  display: flex;
  flex-direction: column;
  align-items: center;
  gap: 13px;
  color: #444;
  background: ${(p) => (p.$active ? "#dedede" : "none")};

  b { font-weight: 400; color: #000; }
`;

const ThemeGrid = styled.div`
  display: grid;
  grid-template-columns: 150px 150px;
  gap: 6px;
  padding: 24px 0 0 18px;
`;

const ThemeCard = styled.button`
  height: 122px;
  background: #fff;
  border: 1px solid #dcdcdc;
`;

const diamond = (cx, cy, w, h) =>
  `M${cx - 5} ${cy - h + 2.5}Q${cx} ${cy - h} ${cx + 5} ${cy - h + 2.5}L${cx + w - 2} ${cy - 2}Q${cx + w + 1} ${cy} ${cx + w - 2} ${cy + 2}L${cx + 5} ${cy + h - 2.5}Q${cx} ${cy + h} ${cx - 5} ${cy + h - 2.5}L${cx - w + 2} ${cy + 2}Q${cx - w - 1} ${cy} ${cx - w + 2} ${cy - 2}Z`;

const ThemeDrawing = ({ line, width, fill, arrow, arrowWidth = 1, heads = 1 }) => (
  <svg width="148" height="120" viewBox="1 1 148 120" fill="none" aria-hidden="true">
    <g stroke={line} strokeWidth={width} fill={fill}>
      <path d={diamond(47, 34, 23, 15)} />
      <rect x="26.500" y="80" width="40" height="25" rx="4" />
      <path d="M100 42h33q4 0 3 4l-6 18q-2 3-5 3H90q-3 0-2-4l7-18q1-3 5-3z" />
    </g>
    <path d={heads ? "M47 49V76M67 92.500H112.500V72" : "M47 49V80M67 92.500H112.500V67"} stroke={arrow} strokeWidth={arrowWidth} />
    {heads > 0 && (
      <path
        d={heads > 1 ? "M47 80l-6-12h12zM112.500 67l-6 12h12z" : "M47 80l-4-8h8zM112.500 67l-4 8h8z"}
        fill={arrow}
      />
    )}
  </svg>
);

const themes = [
  { line: "#555", width: 1, fill: "#fff", arrow: "#333" },
  { line: "#333", width: 3, fill: "#fff", arrow: "#333", arrowWidth: 3, heads: 2 },
  { line: "#111", width: 1.3, fill: "#fff", arrow: "#333", heads: 0 },
  { line: "#595959", width: 2, fill: "#f2f2f2", arrow: "#595959", arrowWidth: 2, heads: 1 },
  { line: "#36b58c", width: 3, fill: "#f2f8f6", arrow: "#444", arrowWidth: 2, heads: 2 },
  { line: "#cde8df", width: 1, fill: "#cde8df", arrow: "#1fbf9f", arrowWidth: 2, heads: 2 },
  { line: "#333", width: 2, fill: "#d4f3f8", arrow: "#333", heads: 2 },
  { line: "#5588b8", width: 1, fill: "#6ba5d6", arrow: "#333", heads: 2 },
];

const PreviewDrawing = () => (
  <svg width="160" height="158" viewBox="1 1 160 158" fontSize="16" textAnchor="middle" aria-hidden="true">
    <path d={diamond(46, 47, 29, 18)} fill="#f5665e" />
    <rect x="21" y="103" width="51" height="32" rx="5" fill="#f5665e" />
    <path d="M113 57h41q5 0 4 5l-9 23q-2 3-6 3h-41q-5 0-4-4l8-22q2-5 7-5z" fill="#f5665e" />
    <path d="M46 65v28M72 119h14M120 119h8V97" stroke="#444" strokeWidth="2.200" fill="none" />
    <path d="M46 103l-6-12h12zM128 88l-6 12h12z" fill="#444" />
    <g fill="#fff">
      <text x="46" y="53">text</text>
      <text x="46" y="125">text</text>
      <text x="128" y="79">text</text>
    </g>
    <text x="103" y="126" fill="#444" fontSize="20">text</text>
  </svg>
);

const ColourTiles = () => (
  <svg width="26" height="20" viewBox="0 0 26 20" aria-hidden="true">
    <path fill="#fff" d="M0 0h26v20H0z" />
    {["#595f5f", "#5a9060", "#4a90e0", "#b83c60", "#f47830", "#80608c"].map((c, i) => (
      <rect key={c} x={2 + (i % 3) * 8} y={2 + Math.floor(i / 3) * 9} width="6" height="8" fill={c} />
    ))}
  </svg>
);

const railIcons = ["image", "layers", "doc", "chart", "table", "floor", "slides", "mind"];

const SidePanels = () => (
  <>
    <Rail>
      <RailToggle aria-label="展开"><Icon name="expand" size={26} /></RailToggle>
      <RailButton aria-label="填充"><Icon name="bucket" size={25} /></RailButton>
      <RailButton $active aria-label="主题"><Icon name="blocks" /></RailButton>
      {railIcons.map((n) => (
        <RailButton key={n} aria-label={n}><Icon name={n} size={23} /></RailButton>
      ))}
    </Rail>
    <ThemePanel>
      <ThemeHeader>主题</ThemeHeader>
      <ThemeTop>
        <Preview><PreviewDrawing /></Preview>
        <Options>
          <button><IconSlot><ColourTiles /></IconSlot>热烈</button>
          <button><IconSlot>Aa</IconSlot>微软雅黑</button>
          <button><IconSlot><Icon name="connectorArrow" size={25} /></IconSlot>通用箭头 4</button>
          <button><IconSlot><Icon name="disk" size={22} /></IconSlot>保存主题</button>
        </Options>
      </ThemeTop>
      <ThemeTabs>
        <ThemeTab $active><Icon name="blocks" /><b>主题</b></ThemeTab>
        <ThemeTab><Icon name="palette" /><b>颜色</b></ThemeTab>
        <ThemeTab><Icon name="connectorArrow" /><b>连接线</b></ThemeTab>
        <ThemeTab><IconSlot>Aa</IconSlot><b>文本</b></ThemeTab>
      </ThemeTabs>
      <ThemeGrid>
        {themes.map((t, i) => (
          <ThemeCard key={i} aria-label={"主题 " + (i + 1)}><ThemeDrawing {...t} /></ThemeCard>
        ))}
      </ThemeGrid>
    </ThemePanel>
  </>
);

/* ---------- status bar ---------- */

const Status = styled.footer`
  flex: none;
  height: 35px;
  padding-top: 6px;
  display: flex;
  justify-content: space-between;
  align-items: flex-start;
  border-top: 1px solid ${LINE};
  color: #444;
`;

const StatusPart = styled.div`
  height: 28px;
  display: flex;
  align-items: center;
`;

const StatusLeft = styled(StatusPart)`
  padding-left: 17px;
`;

const PageName = styled.span`
  width: ${(p) => p.$w}px;
  margin-left: ${(p) => p.$before}px;
  color: #000;
  font-weight: ${(p) => (p.$bold ? 700 : 400)};
`;

const PageDivider = styled.span`
  width: 1px;
  height: 34px;
  margin-left: 2px;
  background: #dcdcdc;
`;

const StatusRight = styled(StatusPart)`
  padding-right: 27px;
`;

const StatusText = styled.span`
  color: #000;
  margin-right: ${(p) => p.$after}px;
`;

const StatusButton = styled.button`
  width: ${(p) => p.$w || 30}px;
  height: 28px;
  display: flex;
  align-items: center;
  justify-content: center;
  color: #444;
`;

const Zoom = styled.input`
  appearance: none;
  width: 102px;
  height: 14px;
  margin: 0;
  background: linear-gradient(90deg, #bdbdbd 27px, #dedede 27px) center / 100% 4px no-repeat;

  &::-webkit-slider-thumb {
    appearance: none;
    width: 13px;
    height: 13px;
    border-radius: 50%;
    border: 2px solid #bdbdbd;
    background: #fff;
  }
`;

const StatusBar = () => (
  <Status>
    <StatusLeft>
      <Icon name="pages" size={28} />
      <PageName $w={114} $before={30}>页-1</PageName>
      <StatusButton $w={16} aria-label="页面列表"><Caret /></StatusButton>
      <PageDivider />
      <PageName $w={32} $before={33} $bold>页-1</PageName>
      <StatusButton $w={96} aria-label="添加页面"><Icon name="plus" size={17} /></StatusButton>
    </StatusLeft>
    <StatusRight>
      <StatusText $after={17}>形状 ID：130</StatusText>
      <StatusButton aria-label="演示"><Icon name="present" size={22} /></StatusButton>
      <StatusButton aria-label="缩小"><Icon name="minus" size={17} /></StatusButton>
      <Zoom type="range" aria-label="缩放" min="0" max="100" defaultValue="24" />
      <StatusButton $w={32} aria-label="放大"><Icon name="plus" size={17} /></StatusButton>
      <StatusText $after={7}>100%</StatusText>
      <Caret $after={18} />
      <StatusButton $w={36} aria-label="全屏"><Icon name="fullscreen" size={22} /></StatusButton>
      <Icon name="fit" size={22} />
    </StatusRight>
  </Status>
);

export default function App() {
  return (
    <>
      <GlobalStyle />
      <Window>
        <AppHeader />
        <RibbonBar />
        <Body>
          <SymbolLibrary />
          <DrawingArea />
          <SidePanels />
        </Body>
        <StatusBar />
      </Window>
    </>
  );
}
